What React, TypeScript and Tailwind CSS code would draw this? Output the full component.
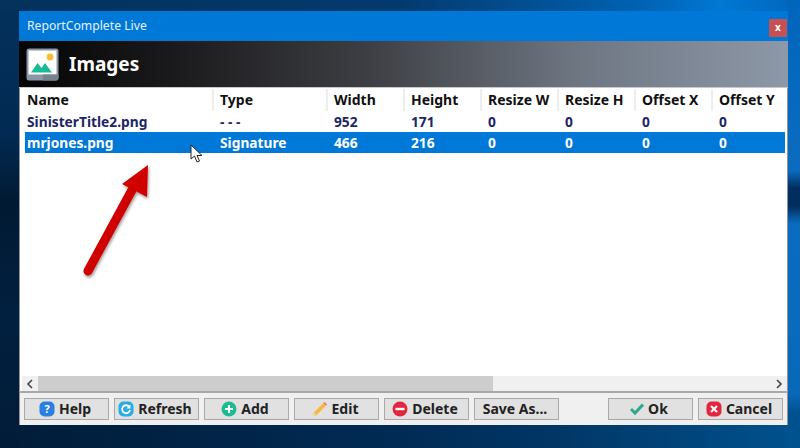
import type { ReactNode } from 'react';

const columns = [
  { label: 'Name', width: 'w-[189px]', pad: 'pl-[2px]' },
  { label: 'Type', width: 'w-[114px]', pad: 'pl-[6px]' },
  { label: 'Width', width: 'w-[77px]', pad: 'pl-[6px]' },
  { label: 'Height', width: 'w-[77px]', pad: 'pl-[6px]' },
  { label: 'Resize W', width: 'w-[77px]', pad: 'pl-[6px]' },
  { label: 'Resize H', width: 'w-[77px]', pad: 'pl-[6px]' },
  { label: 'Offset X', width: 'w-[77px]', pad: 'pl-[6px]' },
  { label: 'Offset Y', width: 'w-[72px]', pad: 'pl-[6px]' },
];

const rows = [
  ['SinisterTitle2.png', '- - -', '952', '171', '0', '0', '0', '0'],
  ['mrjones.png', 'Signature', '466', '216', '0', '0', '0', '0'],
];

function ImageLogo() {
  return (
    <svg width="33" height="33" viewBox="0 0 33 33">
      <rect x="0.5" y="0.5" width="32" height="32" rx="2.5" fill="#8b97a8" />
      <rect x="2.500" y="2.500" width="28" height="24" fill="#ffffff" />
      <path d="M17 32.500V26.500h15.500v3a3 3 0 0 1-3 3z" fill="#76828f" />
      <circle cx="24" cy="9" r="3.400" fill="#fbbc2d" />
      <path d="M5 24.500l6.500-9.500 4 5 3.500-5 7 9.500z" fill="#19bb96" />
    </svg>
  );
}

function HelpIcon() {
  return (
    <svg width="16" height="16" viewBox="0 0 16 16">
      <rect x="0.500" y="0.500" width="15" height="15" rx="5" fill="#2a7fe0" />
      <text x="8" y="12" textAnchor="middle" fontSize="11" fontWeight="700" fill="#fff" fontFamily="'Noto Sans', sans-serif">?</text>
    </svg>
  );
}

function RefreshIcon() {
  return (
    <svg width="16" height="16" viewBox="0 0 16 16">
      <rect x="0.500" y="0.500" width="15" height="15" rx="5" fill="#27ade6" />
      <path d="M11 5.500A4 4 0 1 0 12 9" fill="none" stroke="#fff" strokeWidth="1.800" />
      <path d="M12.500 3.500v4h-4z" fill="#fff" />
    </svg>
  );
}

function AddIcon() {
  return (
    <svg width="16" height="16" viewBox="0 0 16 16">
      <circle cx="8" cy="8" r="7.500" fill="#1dbb94" />
      <path d="M8 4v8M4 8h8" stroke="#fff" strokeWidth="2" />
    </svg>
  );
}

function EditIcon() {
  return (
    <svg width="16" height="16" viewBox="0 0 16 16">
      <path d="M1 15l0.800-3.500L11.500 2l2.500 2.500L4.500 14.200z" fill="#f5b93f" />
      <path d="M1 15l0.800-3.500 2.700 2.700z" fill="#ecdcb8" />
      <path d="M11.500 2l1-1 2.500 2.500-1 1z" fill="#e2725b" />
    </svg>
  );
}

function DeleteIcon() {
  return (
    <svg width="16" height="16" viewBox="0 0 16 16">
      <circle cx="8" cy="8" r="7.500" fill="#e3263f" />
      <path d="M3.500 8h9" stroke="#fff" strokeWidth="2.400" />
    </svg>
  );
}

function OkIcon() {
  return (
    <svg width="14" height="16" viewBox="0 0 14 16">
      <path d="M1 8l4 4 8-8.500" fill="none" stroke="#2fa98c" strokeWidth="3" />
    </svg>
  );
}

function CancelIcon() {
  return (
    <svg width="16" height="16" viewBox="0 0 16 16">
      <rect x="0.500" y="0.500" width="15" height="15" rx="5" fill="#e3263f" />
      <path d="M5 5l6 6M11 5l-6 6" stroke="#fff" strokeWidth="2" />
    </svg>
  );
}

function FooterButton({ icon, label, width }: { icon: ReactNode; label: string; width: string }) {
  return (
    <button
      className={`${width} h-[22px] flex items-center justify-center gap-[4px] pr-[3px] border border-[#a9a9a9] bg-[#e1e1e1] text-[14px] font-bold text-[#222] leading-none`}
    >
      {icon}
      <span>{label}</span>
    </button>
  );
}

export default function App() {
  return (
    <div className="relative w-[800px] h-[448px] overflow-hidden pl-[19px] pt-[11px] bg-[linear-gradient(90deg,#011c38_0%,#012b55_50%,#013766_70%,#00528f_100%)] font-['Noto_Sans',sans-serif]">
      {/* wallpaper edges */}
      <div className="absolute left-0 top-0 w-[19px] h-full bg-[linear-gradient(180deg,#03315c_0%,#022a52_30%,#011a33_45%,#01203f_70%,#011c38_100%)]" />
      <div className="absolute left-0 top-0 w-full h-[11px] bg-[linear-gradient(90deg,#03315c_0%,#033a6e_50%,#0062b2_80%,#0078d4_90%,#0066bb_100%)]" />
      <div className="absolute right-0 top-0 w-[13px] h-full bg-[linear-gradient(180deg,#0066bb_0%,#0b6cbf_38%,#012e5e_42%,#012e5e_46%,#0a6cc0_50%,#0a68b8_88%,#00528f_92%,#00528f_100%)]" />

      <div className="relative w-[769px] h-[414px] flex flex-col bg-[#f0f0f0]">
        {/* title bar */}
        <div className="h-[30px] shrink-0 flex items-center justify-between bg-[#0078d7] pl-[8px] pr-[1px] text-[12.200px] text-[#e6f1fb]">
          <span>ReportComplete Live</span>
          <div className="w-[18px] h-[18px] mt-[3px] pb-[2px] flex items-center justify-center bg-[#c75050] text-[10px] font-bold text-white leading-none">
            x
          </div>
        </div>

        {/* header */}
        <div className="h-[47px] shrink-0 flex items-center gap-[10px] pl-[7px] bg-[linear-gradient(90deg,#050505_0%,#1a1a1c_20%,#3d3e43_45%,#6d7581_72%,#8d98a8_100%)] border-b border-[#c8c8c8]">
          <ImageLogo />
          <span className="text-[19px] font-bold text-white">Images</span>
        </div>

        {/* table */}
        <div className="flex-1 min-h-0 bg-white flex flex-col pl-[5px] pr-[2px] pt-[1px] border-x border-[#8f959c]">
          <div className="h-[22px] shrink-0 flex">
            {columns.map((col, j) => (
              <div
                key={col.label}
                className={`${col.width} ${col.pad} shrink-0 flex items-center pb-[2px] text-[14px] font-bold text-[#111] whitespace-nowrap ${j < 7 ? 'border-r-2 border-[#eeeeee]' : ''}`}
              >
                {col.label}
              </div>
            ))}
          </div>
          {rows.map((row, i) => (
            <div
              key={row[0]}
              className={`h-[21px] shrink-0 flex items-center pt-[1px] text-[13.750px] font-bold whitespace-nowrap ${i === 1 ? 'bg-[#0078d7] text-white' : 'text-[#1c2566]'}`}
            >
              {columns.map((col, j) => (
                <div key={col.label} className={`${col.width} ${col.pad} shrink-0`}>
                  {row[j]}
                </div>
              ))}
            </div>
          ))}
        </div>

        {/* horizontal scroll bar */}
        <div className="h-[15px] shrink-0 flex items-center pl-[2px] bg-white border-x border-[#8f959c]">
          <div className="w-[16px] h-full shrink-0 flex items-center justify-center bg-[#f0f0f0]">
            <svg width="8" height="10" viewBox="0 0 8 10"><path d="M6 1L2 5l4 4" fill="none" stroke="#444" strokeWidth="1.600" /></svg>
          </div>
          <div className="w-[455px] h-full bg-[#cdcdcd]" />
          <div className="flex-1 h-full bg-[#f0f0f0]" />
          <div className="w-[17px] h-full shrink-0 flex items-center justify-center bg-[#f0f0f0]">
            <svg width="8" height="10" viewBox="0 0 8 10"><path d="M2 1l4 4-4 4" fill="none" stroke="#444" strokeWidth="1.600" /></svg>
          </div>
        </div>

        {/* footer */}
        <div className="h-[34px] shrink-0 flex items-center gap-[5px] pl-[4px] pr-[4px] border-x border-x-[#8f959c] border-t-2 border-t-[#a8a8a8]">
          <FooterButton icon={<HelpIcon />} label="Help" width="w-[85px]" />
          <FooterButton icon={<RefreshIcon />} label="Refresh" width="w-[85px]" />
          <FooterButton icon={<AddIcon />} label="Add" width="w-[85px]" />
          <FooterButton icon={<EditIcon />} label="Edit" width="w-[85px]" />
          <FooterButton icon={<DeleteIcon />} label="Delete" width="w-[85px]" />
          <FooterButton icon={null} label="Save As..." width="w-[85px]" />
          <div className="flex-1" />
          <FooterButton icon={<OkIcon />} label="Ok" width="w-[85px]" />
          <FooterButton icon={<CancelIcon />} label="Cancel" width="w-[85px]" />
        </div>
      </div>

      {/* annotation arrow */}
      <svg className="absolute left-[75px] top-[160px]" width="90" height="125" viewBox="75 160 90 125">
        <defs>
          <filter id="arrowShadow" x="-30%" y="-30%" width="160%" height="160%">
            <feDropShadow dx="1" dy="2" stdDeviation="1.500" floodColor="#000" floodOpacity="0.4" />
          </filter>
        </defs>
        <g filter="url(#arrowShadow)">
          <path d="M88 271L132 190" stroke="#d00000" strokeWidth="9" strokeLinecap="round" fill="none" />
          <path d="M148 165L122 184L147 197z" fill="#d00000" />
        </g>
      </svg>

      {/* mouse pointer */}
      <svg className="absolute left-[190px] top-[144px]" width="13" height="19" viewBox="0 0 13 19">
        <path d="M1 1v14l3.500-3 2.500 6 2.500-1-2.500-5.500H12z" fill="#fff" stroke="#222" strokeWidth="1" />
      </svg>
    </div>
  );
}
